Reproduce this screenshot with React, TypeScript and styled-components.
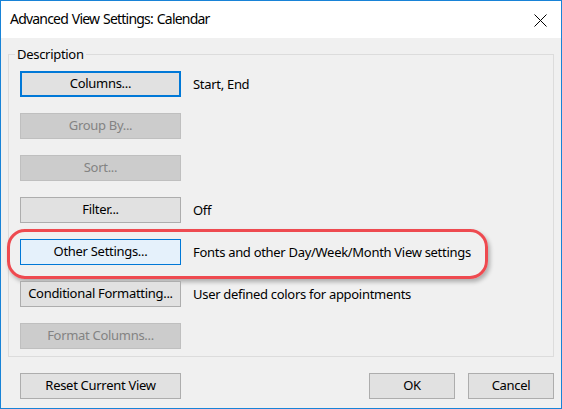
import React from 'react';
import styled, { createGlobalStyle } from 'styled-components';

const GlobalStyle = createGlobalStyle`
  html, body {
    margin: 0;
    padding: 0;
    background: #ffffff;
  }
  * {
    box-sizing: border-box;
  }
`;

// ─── Styled Components ────────────────────────────────────────────────────────

const Window = styled.div`
  width: 562px;
  height: 409px;
  border: 1px solid #1883d7;
  background: #f0f0f0;
  display: flex;
  flex-direction: column;
  font-family: 'Noto Sans', 'Open Sans', sans-serif;
  font-size: 13px;
  letter-spacing: -0.3px;
  color: #000;
`;

const TitleBar = styled.div`
  height: 37px;
  flex-shrink: 0;
  background: #ffffff;
  display: flex;
  align-items: center;
  justify-content: space-between;
  padding: 0 11px 0 9px;
`;

const Title = styled.span`
  font-size: 14px;
  letter-spacing: -0.8px;
  word-spacing: 1px;
  color: #000;
  padding-bottom: 2px;
`;

const CloseButton = styled.button`
  width: 20px;
  height: 20px;
  border: none;
  background: transparent;
  padding: 0;
  display: flex;
  align-items: center;
  justify-content: center;
  margin-top: 1px;
`;

const Body = styled.div`
  flex: 1;
  display: flex;
  flex-direction: column;
  padding: 8px 7px 0 7px;
`;

const GroupBox = styled.fieldset`
  margin: 0;
  border: 1px solid #dcdcdc;
  padding: 9px 11px 7px 11px;
  display: flex;
  flex-direction: column;
  gap: 16px;
`;

const GroupLegend = styled.legend`
  padding: 0 2px;
  margin-left: -5px;
  font-size: 13px;
  line-height: 16px;
`;

const SettingRow = styled.div`
  position: relative;
  display: flex;
  align-items: center;
  gap: 12px;
  height: 26px;
`;

const DialogButton = styled.button<{ variant?: 'default' | 'focused' | 'hover' | 'disabled'; width?: number }>`
  width: ${(p) => p.width ?? 161}px;
  height: 26px;
  flex-shrink: 0;
  font-family: inherit;
  font-size: 13px;
  letter-spacing: inherit;
  padding: 0 0 2px;
  cursor: default;
  color: ${(p) => (p.variant === 'disabled' ? '#838383' : '#000')};
  background: ${(p) =>
    p.variant === 'disabled' ? '#cccccc' : p.variant === 'hover' ? '#e5f1fb' : '#e1e1e1'};
  border: ${(p) =>
    p.variant === 'focused'
      ? '2px solid #0078d7'
      : p.variant === 'hover'
        ? '1px solid #0078d7'
        : p.variant === 'disabled'
          ? '1px solid #bfbfbf'
          : '1px solid #adadad'};
`;

const RowText = styled.span`
  white-space: nowrap;
`;

const Highlight = styled.div`
  position: absolute;
  left: -13px;
  top: -10px;
  width: 481px;
  height: 50px;
  border: 3px solid #ee4a50;
  border-radius: 18px;
  box-shadow: 2px 3px 4px rgba(0, 0, 0, 0.28);
  pointer-events: none;
`;

const Footer = styled.div`
  display: flex;
  align-items: center;
  padding: 16px 0 0 12px;
`;

const FooterRight = styled.div`
  margin-left: auto;
  display: flex;
  gap: 13px;
`;

// ─── Data ─────────────────────────────────────────────────────────────────────

type Variant = 'default' | 'focused' | 'hover' | 'disabled';

const rows: { label: string; text?: string; variant: Variant; highlight?: boolean }[] = [
  { label: 'Columns...', text: 'Start, End', variant: 'focused' },
  { label: 'Group By...', variant: 'disabled' },
  { label: 'Sort...', variant: 'disabled' },
  { label: 'Filter...', text: 'Off', variant: 'default' },
  {
    label: 'Other Settings...',
    text: 'Fonts and other Day/Week/Month View settings',
    variant: 'hover',
    highlight: true,
  },
  { label: 'Conditional Formatting...', text: 'User defined colors for appointments', variant: 'default' },
  { label: 'Format Columns...', variant: 'disabled' },
];

// ─── Component ────────────────────────────────────────────────────────────────

export default function App() {
  return (
    <>
      <GlobalStyle />
      <Window>
        <TitleBar>
          <Title>Advanced View Settings: Calendar</Title>
          <CloseButton aria-label='Close'>
            <svg width='13' height='13' viewBox='0 0 13 13'>
              <path d='M0.5 0.5 L12.5 12.5 M12.5 0.5 L0.5 12.5' stroke='#000' strokeWidth='1' />
            </svg>
          </CloseButton>
        </TitleBar>

        <Body>
          <GroupBox>
            <GroupLegend>Description</GroupLegend>
            {rows.map((row) => (
              <SettingRow key={row.label}>
                <DialogButton variant={row.variant}>{row.label}</DialogButton>
                {row.text && <RowText>{row.text}</RowText>}
                {row.highlight && <Highlight />}
              </SettingRow>
            ))}
          </GroupBox>

          <Footer>
            <DialogButton>Reset Current View</DialogButton>
            <FooterRight>
              <DialogButton width={86}>OK</DialogButton>
              <DialogButton width={86}>Cancel</DialogButton>
            </FooterRight>
          </Footer>
        </Body>
      </Window>
    </>
  );
}
